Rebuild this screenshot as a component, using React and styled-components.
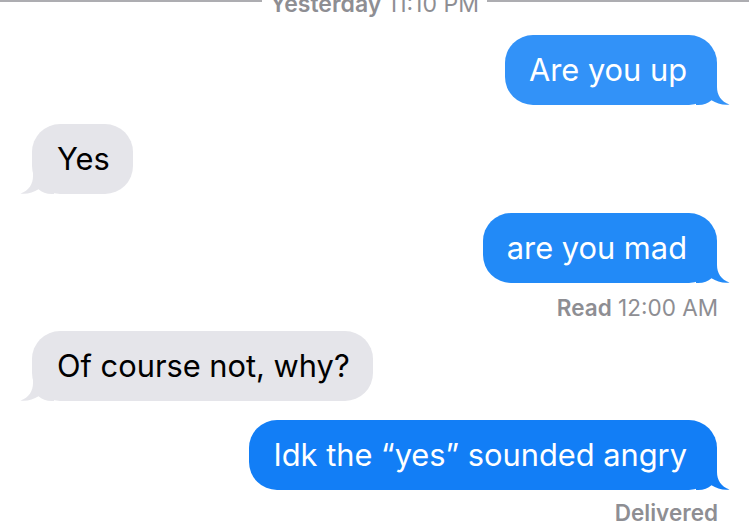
import React from 'react'
import styled, { createGlobalStyle } from 'styled-components'

const GlobalStyle = createGlobalStyle`
  html, body {
    margin: 0;
    padding: 0;
    background: #ffffff;
    overflow: hidden;
  }
  body {
    font-family: Inter, "Noto Sans", "Liberation Sans", sans-serif;
    -webkit-font-smoothing: antialiased;
  }
`

const Screen = styled.div`
  width: 749px;
  height: 526px;
  display: flex;
  flex-direction: column;
  box-sizing: border-box;
  padding: 0 32px 0 32px;
  overflow: hidden;

  & > * {
    flex-shrink: 0;
  }
`

const Header = styled.div`
  display: flex;
  align-items: flex-start;
  gap: 8px;
  height: 35px;
  margin: 0 -32px;
`

const Rule = styled.div`
  flex: 1;
  height: 2px;
  background: #adadb1;
`

const Stamp = styled.div`
  margin-top: -10px;
  font-size: 23px;
  line-height: 28px;
  color: #8e8e93;
  white-space: nowrap;

  b {
    font-weight: 600;
  }
`

const Row = styled.div`
  display: flex;
  justify-content: ${p => (p.$me ? 'flex-end' : 'flex-start')};
  margin-bottom: ${p => p.$gap}px;
`

const Bubble = styled.div`
  position: relative;
  padding: ${p => (p.$me ? '17px 30px 17px 24px' : '17px 23px 17px 25px')};
  border-radius: 28px;
  font-size: 30.8px;
  line-height: 36px;
  white-space: nowrap;
  background: ${p => p.$bg};
  color: ${p => (p.$me ? '#ffffff' : '#000000')};
`

const TailSvg = styled.svg`
  position: absolute;
  bottom: 0;
  width: 34px;
  height: 30px;
  ${p => (p.$me ? 'right: -13px;' : 'left: -12px; transform: scaleX(-1);')}
`

const Status = styled.div`
  align-self: flex-end;
  margin: ${p => (p.$last ? '-10px -1px 0 0' : '-8px -1px 10px 0')};
  font-size: 22.5px;
  line-height: 27px;
  color: #8e8e93;

  b {
    font-weight: 600;
  }
`

function Tail({ me, color }) {
  return (
    <TailSvg $me={me} viewBox="0 0 34 30">
      <path
        d="M0 0 H21 V12 C21 20 25 26.5 33.5 29.6 C27 30.4 20.5 28.6 15.5 25.3 C12 28.4 8 30 2 30 H0 Z"
        fill={color}
      />
    </TailSvg>
  )
}

function Message({ me, color, gap, children }) {
  return (
    <Row $me={me} $gap={gap}>
      <Bubble $me={me} $bg={color}>
        {children}
        <Tail me={me} color={color} />
      </Bubble>
    </Row>
  )
}

const GREY = '#e5e5ea'

export default function App() {
  return (
    <>
      <GlobalStyle />
      <Screen>
        <Header>
          <Rule />
          <Stamp><b>Yesterday</b> 11:10 PM</Stamp>
          <Rule />
        </Header>

        <Message me color="#3292f8" gap={19}>Are you up</Message>
        <Message color={GREY} gap={19}>Yes</Message>
        <Message me color="#228af7" gap={19}>are you mad</Message>
        <Status><b>Read</b> 12:00 AM</Status>
        <Message color={GREY} gap={19}>Of course not, why?</Message>
        <Message me color="#127ef6" gap={19}>Idk the “yes” sounded angry</Message>
        <Status $last><b>Delivered</b></Status>
      </Screen>
    </>
  )
}
